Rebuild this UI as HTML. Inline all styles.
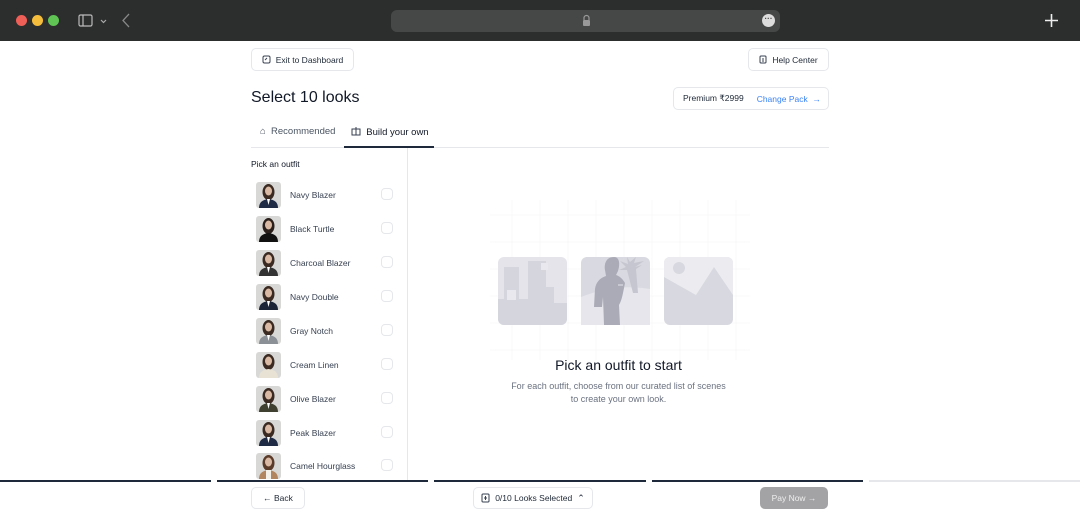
<!DOCTYPE html>
<html><head><meta charset="utf-8"><style>
*{box-sizing:border-box;margin:0;padding:0}
body{width:1080px;height:513px;overflow:hidden;background:#fff;font-family:"Liberation Sans",sans-serif;color:#111827;position:relative}
.bar{position:absolute;left:0;top:0;width:1080px;height:41px;background:#2c2d2d}
.dot{position:absolute;top:15px;width:11px;height:11px;border-radius:50%}
.url{position:absolute;left:391px;top:10px;width:389px;height:22px;border-radius:6px;background:#464747}
.btn{position:absolute;border:1px solid #e5e7eb;border-radius:5px;background:#fff;font-size:8.5px;display:flex;align-items:center;justify-content:center;gap:5px;color:#1f2937}
.abs{position:absolute}
.item{position:absolute;left:256px;width:140px;height:26px}
.thumb{position:absolute;left:0;top:0;width:25px;height:26px;border-radius:3px;background:#d8d8d6;overflow:hidden}
.name{position:absolute;left:34px;top:8px;font-size:8.5px;color:#374151}
.cb{position:absolute;left:125px;top:6px;width:12px;height:12px;border:1px solid #e5e7eb;border-radius:4px}
.seg{position:absolute;top:480px;height:2px}
</style></head><body>
<div class="bar">
<div class="dot" style="left:16px;background:#ed5f57"></div>
<div class="dot" style="left:32px;background:#f4bd3b"></div>
<div class="dot" style="left:48px;background:#5fc454"></div>
<svg class="abs" style="left:78px;top:14px" width="36" height="14"><rect x="1" y="1" width="13" height="11" rx="1.5" fill="none" stroke="#bbb" stroke-width="1.2"/><line x1="5" y1="1" x2="5" y2="12" stroke="#bbb" stroke-width="1.2"/><path d="M23 6l2.5 2.5L28 6" stroke="#aaa" fill="none" stroke-width="1.2"/></svg>
<svg class="abs" style="left:121px;top:13px" width="10" height="15"><path d="M8 1L2 7.5 8 14" stroke="#888" fill="none" stroke-width="1.3"/></svg>
<div class="url">
<svg class="abs" style="left:191px;top:4px" width="9" height="12"><path d="M2 6V4a2.5 2.5 0 0 1 5 0v2" stroke="#999" fill="none" stroke-width="1.2"/><rect x="1" y="6" width="7" height="6" rx="1" fill="#999"/></svg>
<div class="abs" style="left:371px;top:4px;width:13px;height:13px;border-radius:50%;background:#ddd;color:#444;font-size:8px;line-height:9px;text-align:center;font-weight:bold">···</div>
</div>
<svg class="abs" style="left:1045px;top:14px" width="13" height="13"><path d="M6.5 0v13M0 6.5h13" stroke="#eee" stroke-width="1.6"/></svg>
</div>

<div class="btn" style="left:251px;top:48px;width:103px;height:23px"><svg width="9" height="9"><rect x="1" y="1" width="7" height="7" rx="1.5" fill="none" stroke="#374151"/><path d="M3 5l2-2" stroke="#374151"/></svg>Exit to Dashboard</div>
<div class="btn" style="left:748px;top:48px;width:81px;height:23px"><svg width="8" height="9"><rect x="1" y="1" width="6" height="7" rx="1" fill="none" stroke="#374151"/><path d="M3 4h2M3 6h2" stroke="#374151"/></svg>Help Center</div>

<div class="abs" style="left:251px;top:89px;font-size:16px;color:#111827">Select 10 looks</div>
<div class="btn" style="left:673px;top:87px;width:156px;height:23px;justify-content:flex-start;padding-left:9px;gap:0"><span>Premium ₹2999</span><span style="color:#3b82f6;margin-left:13px">Change Pack &nbsp;→</span></div>

<div class="abs" style="left:260px;top:126px;font-size:9.5px;color:#4b5563">⌂&nbsp; Recommended</div>
<div class="abs" style="left:351px;top:126px;font-size:9.5px;color:#111827"><svg width="10" height="10" style="vertical-align:-1px"><rect x="1" y="3" width="8" height="6" fill="none" stroke="#374151"/><path d="M1 3h8M5 1v8" stroke="#374151"/></svg>&nbsp; Build your own</div>
<div class="abs" style="left:251px;top:147px;width:578px;height:1px;background:#e5e7eb"></div>
<div class="abs" style="left:344px;top:146px;width:90px;height:2px;background:#1e293b"></div>
<div class="abs" style="left:407px;top:148px;width:1px;height:332px;background:#e5e7eb"></div>

<div class="abs" style="left:251px;top:159px;font-size:8.5px;color:#111827">Pick an outfit</div>

<div class="item" style="top:182px"><div class="thumb"><svg width="25" height="26"><ellipse cx="12.5" cy="10" rx="6" ry="8" fill="#3a2a22"/><ellipse cx="12.5" cy="9" rx="3.5" ry="4.5" fill="#d9b9a3"/><path d="M3 26q0-8 9.5-9 9.5 1 9.5 9z" fill="#1f2a44"/><path d="M11 17l1.5 6 1.5-6z" fill="#fff"/></svg></div><div class="name">Navy Blazer</div><div class="cb"></div></div>
<div class="item" style="top:216px"><div class="thumb"><svg width="25" height="26"><ellipse cx="12.5" cy="10" rx="6" ry="8" fill="#2a1f1a"/><ellipse cx="12.5" cy="9" rx="3.5" ry="4.5" fill="#d9b9a3"/><path d="M3 26q0-8 9.5-9 9.5 1 9.5 9z" fill="#111"/></svg></div><div class="name">Black Turtle</div><div class="cb"></div></div>
<div class="item" style="top:250px"><div class="thumb"><svg width="25" height="26"><ellipse cx="12.5" cy="10" rx="6" ry="8" fill="#3a2a22"/><ellipse cx="12.5" cy="9" rx="3.5" ry="4.5" fill="#d9b9a3"/><path d="M3 26q0-8 9.5-9 9.5 1 9.5 9z" fill="#333"/><path d="M11 17l1.5 6 1.5-6z" fill="#fff"/></svg></div><div class="name">Charcoal Blazer</div><div class="cb"></div></div>
<div class="item" style="top:284px"><div class="thumb"><svg width="25" height="26"><ellipse cx="12.5" cy="10" rx="6" ry="8" fill="#3a2a22"/><ellipse cx="12.5" cy="9" rx="3.5" ry="4.5" fill="#d9b9a3"/><path d="M3 26q0-8 9.5-9 9.5 1 9.5 9z" fill="#1c2438"/><path d="M11 17l1.5 6 1.5-6z" fill="#fff"/></svg></div><div class="name">Navy Double</div><div class="cb"></div></div>
<div class="item" style="top:318px"><div class="thumb"><svg width="25" height="26"><ellipse cx="12.5" cy="10" rx="6" ry="8" fill="#3a2a22"/><ellipse cx="12.5" cy="9" rx="3.5" ry="4.5" fill="#d9b9a3"/><path d="M3 26q0-8 9.5-9 9.5 1 9.5 9z" fill="#8b8f96"/><path d="M11 17l1.5 6 1.5-6z" fill="#fff"/></svg></div><div class="name">Gray Notch</div><div class="cb"></div></div>
<div class="item" style="top:352px"><div class="thumb"><svg width="25" height="26"><ellipse cx="12.5" cy="10" rx="6" ry="8" fill="#3a2a22"/><ellipse cx="12.5" cy="9" rx="3.5" ry="4.5" fill="#d9b9a3"/><path d="M3 26q0-8 9.5-9 9.5 1 9.5 9z" fill="#e8e2d4"/></svg></div><div class="name">Cream Linen</div><div class="cb"></div></div>
<div class="item" style="top:386px"><div class="thumb"><svg width="25" height="26"><ellipse cx="12.5" cy="10" rx="6" ry="8" fill="#3a2a22"/><ellipse cx="12.5" cy="9" rx="3.5" ry="4.5" fill="#d9b9a3"/><path d="M3 26q0-8 9.5-9 9.5 1 9.5 9z" fill="#3f4030"/><path d="M11 17l1.5 6 1.5-6z" fill="#fff"/></svg></div><div class="name">Olive Blazer</div><div class="cb"></div></div>
<div class="item" style="top:420px"><div class="thumb"><svg width="25" height="26"><ellipse cx="12.5" cy="10" rx="6" ry="8" fill="#3a2a22"/><ellipse cx="12.5" cy="9" rx="3.5" ry="4.5" fill="#d9b9a3"/><path d="M3 26q0-8 9.5-9 9.5 1 9.5 9z" fill="#1f2a44"/><path d="M11 17l1.5 6 1.5-6z" fill="#fff"/></svg></div><div class="name">Peak Blazer</div><div class="cb"></div></div>
<div class="item" style="top:453px"><div class="thumb"><svg width="25" height="26"><ellipse cx="12.5" cy="10" rx="6" ry="8" fill="#5a3a28"/><ellipse cx="12.5" cy="9" rx="3.5" ry="4.5" fill="#d9b9a3"/><path d="M3 26q0-8 9.5-9 9.5 1 9.5 9z" fill="#b08560"/><path d="M10 17h5v9h-5z" fill="#f3f0ea"/></svg></div><div class="name">Camel Hourglass</div><div class="cb"></div></div>

<!-- illustration -->
<svg class="abs" style="left:490px;top:200px" width="260" height="160">
<g stroke="#f8f8fa" stroke-width="1">
<path d="M0 15H260M0 42H260M0 69H260M0 96H260M0 123H260M0 150H260M22 0V160M50 0V160M78 0V160M106 0V160M134 0V160M162 0V160M190 0V160M218 0V160M246 0V160"/>
</g>
<g transform="translate(8,57)">
<rect width="69" height="68" rx="6" fill="#e4e4ea"/>
<path d="M6 10h15v32h9V4h18v26h8v16h13v16a6 6 0 0 1-6 6H6a6 6 0 0 1-6-6V42h6z" fill="#d5d5de"/>
<rect x="9" y="33" width="9" height="10" fill="#e8e8ee"/>
<rect x="43" y="6" width="7" height="7" fill="#e8e8ee"/>
</g>
<g transform="translate(91,57)">
<rect width="69" height="68" rx="6" fill="#d9d9e1"/>
<path d="M0 40q35-14 69-8V68H0z" fill="#e6e6ec"/>
<path d="M57 36l-2-24 6-4-7 2 9-6-10 2 2-6-6 5-3-5 1 7-8-3 6 6-7 3 8 0 6 23z" fill="#c6c6d0"/>
<path d="M33 0c-8 0-10 7-9 13l1 6c-6 2-10 6-11 13l-1 18h8l1-10 1 28h16l-1-20c3-5 4-12 6-22-3-5-6-7-9-8l2-4c2-6 2-14-4-14z" fill="#ababb7"/>
<path d="M37 28h5" stroke="#e6e6ec" stroke-width="1"/>
</g>
<g transform="translate(174,57)">
<rect width="69" height="68" rx="6" fill="#d8d8e0"/>
<path d="M6 0h57a6 6 0 0 1 6 6v32L50 10 32 38 0 20V6a6 6 0 0 1 6-6z" fill="#ececf0"/>
<circle cx="15" cy="11" r="6" fill="#d8d8e0"/>
</g>
</svg>

<div class="abs" style="left:408px;top:357px;width:421px;text-align:center;font-size:14px;color:#111827">Pick an outfit to start</div>
<div class="abs" style="left:408px;top:380px;width:421px;text-align:center;font-size:9px;line-height:13px;color:#6b7280">For each outfit, choose from our curated list of scenes<br>to create your own look.</div>

<div class="seg" style="left:0;width:211px;background:#1e293b"></div>
<div class="seg" style="left:217px;width:211px;background:#1e293b"></div>
<div class="seg" style="left:434px;width:212px;background:#1e293b"></div>
<div class="seg" style="left:652px;width:211px;background:#1e293b"></div>
<div class="seg" style="left:869px;width:211px;background:#e5e7eb"></div>

<div class="btn" style="left:251px;top:487px;width:54px;height:22px">← Back</div>
<div class="btn" style="left:473px;top:487px;width:120px;height:22px"><svg width="9" height="10"><rect x="1" y="1" width="7" height="8" rx="1" fill="none" stroke="#374151"/><path d="M3 5h3M4.5 3v4" stroke="#374151"/></svg>0/10 Looks Selected <span style="font-size:9px">⌃</span></div>
<div class="btn" style="left:760px;top:487px;width:68px;height:22px;background:#a3a3a6;border-color:#a3a3a6;color:#eee">Pay Now →</div>
</body></html>
